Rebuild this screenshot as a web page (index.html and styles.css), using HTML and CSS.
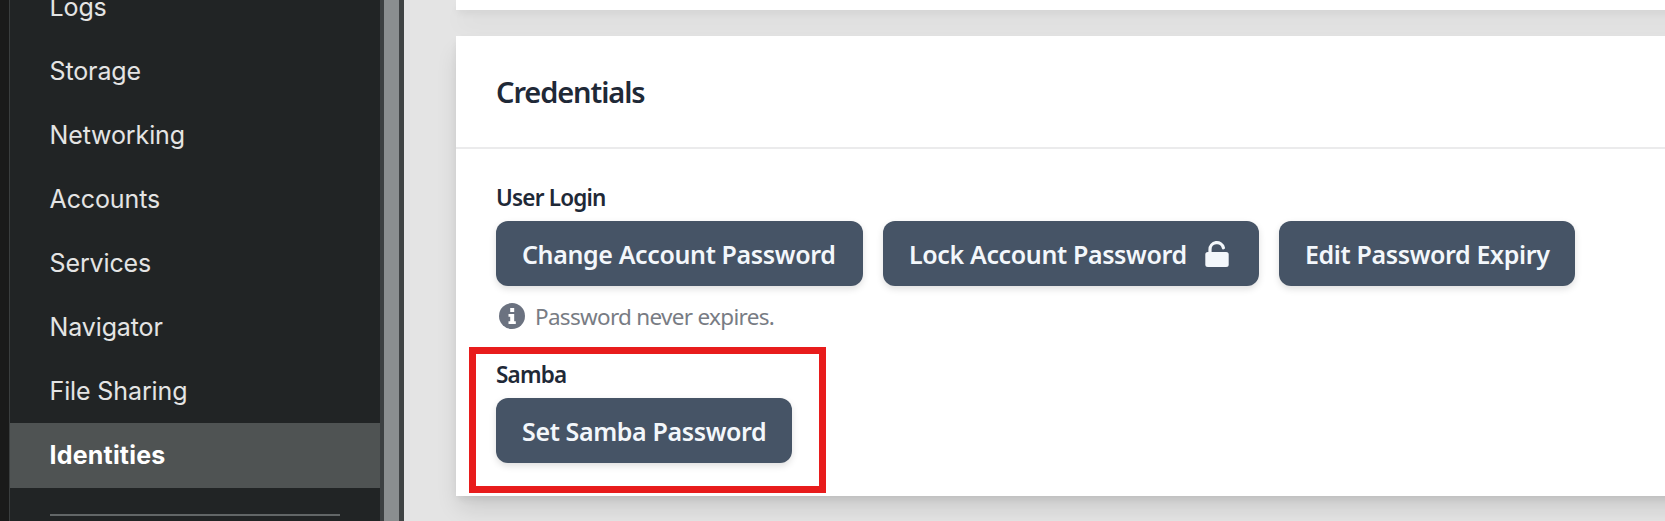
FILE: index.html
```html
<!DOCTYPE html>
<html lang="en">
<head>
<meta charset="UTF-8">
<title>Identities</title>
<link rel="stylesheet" href="styles.css">
</head>
<body>
<div class="page">
	<nav class="sidebar">
		<a class="nav-item">Logs</a>
		<a class="nav-item">Storage</a>
		<a class="nav-item">Networking</a>
		<a class="nav-item">Accounts</a>
		<a class="nav-item">Services</a>
		<a class="nav-item">Navigator</a>
		<a class="nav-item">File Sharing</a>
		<a class="nav-item active">Identities</a>
		<hr class="nav-line">
	</nav>
	<div class="scrollbar"></div>
	<main class="content">
		<section class="card card-prev"></section>
		<section class="card">
			<h2 class="card-header">Credentials</h2>
			<div class="card-body">
				<div class="label">User Login</div>
				<div class="buttons">
					<button class="btn btn-change">Change Account Password</button>
					<button class="btn btn-lock">
						<span>Lock Account Password</span>
						<svg class="icon-lock" viewBox="0 0 24 26">
							<rect x="0.3" y="11" width="23.4" height="15" rx="2.5" fill="currentColor"/>
							<path d="M5 12V8.6A6.8 6.8 0 0 1 18.4 6.8" fill="none" stroke="currentColor" stroke-width="3.2" stroke-linecap="round"/>
						</svg>
					</button>
					<button class="btn btn-expiry">Edit Password Expiry</button>
				</div>
				<div class="hint">
					<svg class="icon-info" viewBox="0 0 26 26">
						<circle cx="13" cy="13" r="13" fill="#6b7280"/>
						<path d="M11.2 5h4v4h-4zM9.5 11h5.7v7.2h1.6V21H9.5v-2.8h1.7v-4.4H9.5z" fill="#fff"/>
					</svg>
					<span>Password never expires.</span>
				</div>
				<div class="samba">
					<div class="label">Samba</div>
					<button class="btn btn-samba">Set Samba Password</button>
				</div>
			</div>
		</section>
	</main>
</div>
</body>
</html>
```

FILE: styles.css
```css
*{
	margin: 0;
	padding: 0;
	box-sizing: border-box;
}
body{
	background-color: #e4e4e4;
	overflow: hidden;
	font-family: "Noto Sans", sans-serif;
}
.page{
	display: flex;
	height: 521px;
	overflow: hidden;
}
/* sidebar */
.sidebar{
	width: 380px;
	flex: none;
	display: flex;
	flex-direction: column;
	justify-content: flex-end;
	padding-bottom: 5px;
	border-left: 9px solid #1a1a1a;
	background: #212425;
	box-shadow: inset 1px 0 0 #3b3e3f;
}
.nav-item{
	flex: none;
	height: 64px;
	margin-left: 1px;
	padding-left: 39.5px;
	line-height: 64px;
	font-family: Inter, sans-serif;
	font-size: 25px;
	letter-spacing: -0.12px;
	color: #e4e4e4;
}
.nav-item.active{
	height: 65px;
	background: #4f5353;
	color: #fff;
	font-weight: 700;
	letter-spacing: 0.2px;
}
.nav-line{
	flex: none;
	height: 2px;
	margin: 26px 40px 0 41px;
	border: 0;
	background: #626667;
}
.scrollbar{
	width: 24px;
	flex: none;
	background: #8a8e8f;
	border-left: 4px solid #3c4041;
	border-right: 5px solid #3f4344;
}
/* content */
.content{
	flex: 1;
	margin-right: -40px;
	padding-left: 52px;
}
.card{
	height: 460px;
	background: #fff;
	box-shadow: 0 14px 22px -3px rgba(0,0,0,.12), 0 4px 8px -2px rgba(0,0,0,.09);
}
.card-prev{
	height: 10px;
	margin-bottom: 26px;
}
.card-header{
	height: 113px;
	padding-left: 40px;
	line-height: 111px;
	border-bottom: 2px solid #ebebec;
	font-size: 29px;
	font-weight: 600;
	letter-spacing: -1.1px;
	color: #1f2937;
}
.card-body{
	padding: 36px 0 0 40px;
}
.label{
	height: 36px;
	line-height: 26px;
	font-size: 22.5px;
	font-weight: 600;
	letter-spacing: -0.8px;
	color: #1f2937;
}
.buttons{
	display: flex;
	gap: 20px;
}
.btn{
	height: 65px;
	display: flex;
	align-items: center;
	padding: 1px 0 0 26px;
	border: 0;
	border-radius: 12px;
	background: #465466;
	box-shadow: 0 3px 7px rgba(0,0,0,.13);
	font-family: inherit;
	font-size: 25px;
	font-weight: 600;
	letter-spacing: -0.37px;
	color: #f3f7fb;
	white-space: nowrap;
}
.btn-change{ width: 367px; }
.btn-lock{ width: 376px; }
.btn-expiry{ width: 296px; }
.btn-samba{ width: 296px; }
.icon-lock{
	width: 24px;
	height: 26px;
	margin-left: auto;
	margin-right: 30px;
}
.hint{
	height: 61px;
	display: flex;
	align-items: center;
	padding: 0 0 1px 3px;
	gap: 10px;
	font-size: 22.5px;
	letter-spacing: -0.7px;
	color: #787c84;
}
.icon-info{
	width: 26px;
	height: 26px;
}
/* red frame around the samba block */
.samba{
	width: 357px;
	height: 146px;
	margin-left: -27px;
	padding: 8px 0 0 20px;
	border: 7px solid #e81c1c;
}
```
